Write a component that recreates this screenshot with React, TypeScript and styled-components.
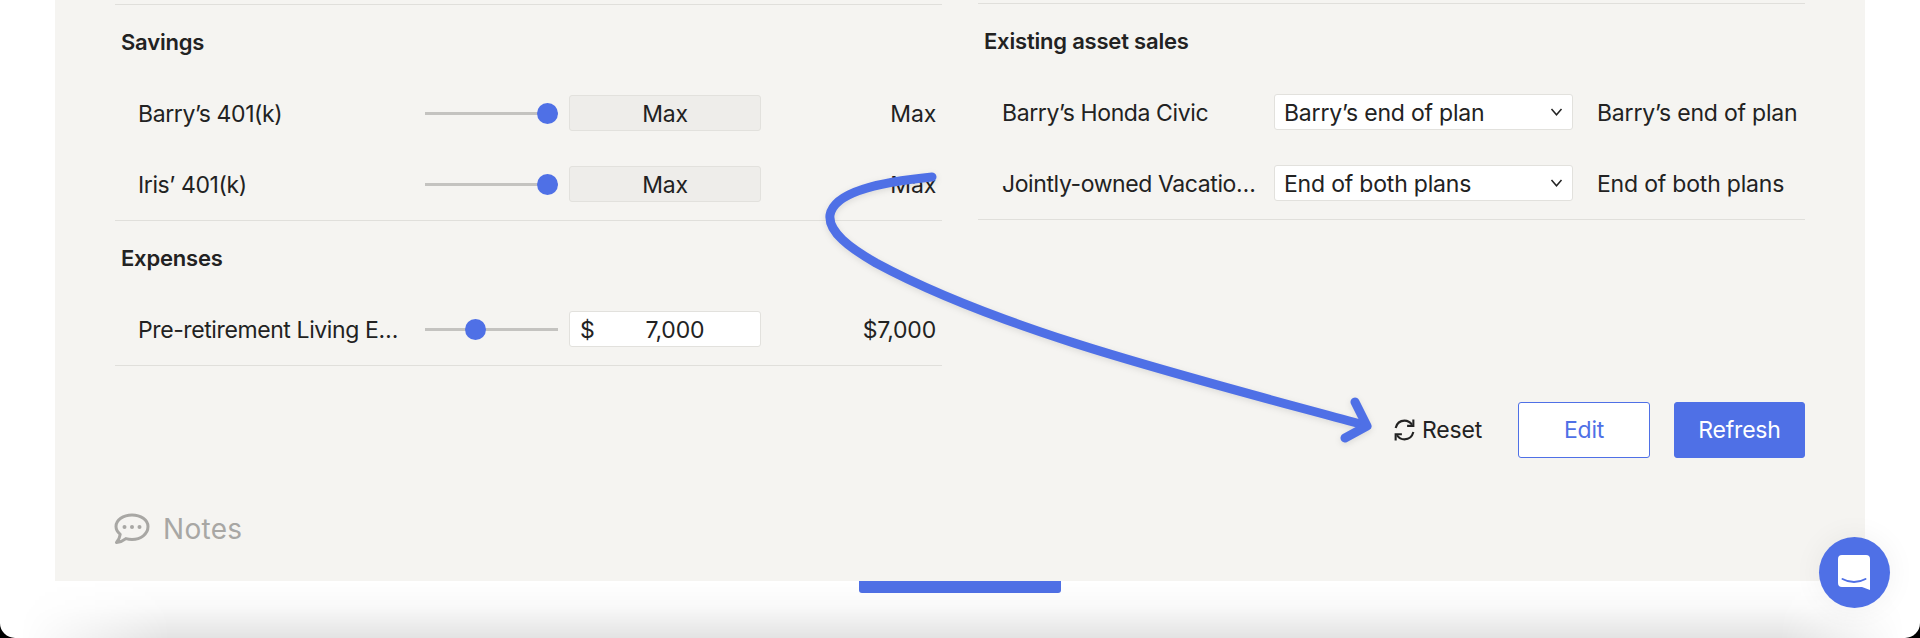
import React from 'react';
import styled, { createGlobalStyle } from 'styled-components';

const BLUE = '#4f70e6';

const GlobalStyle = createGlobalStyle`
  html, body {
    margin: 0;
    padding: 0;
    background: #000;
    font-family: Inter, 'Noto Sans', sans-serif;
  }
  * {
    box-sizing: border-box;
  }
`;

const savings = [
  { name: 'Barry’s 401(k)', value: 'Max' },
  { name: 'Iris’ 401(k)', value: 'Max' },
];

const sales = [
  { name: 'Barry’s Honda Civic', choice: 'Barry’s end of plan' },
  { name: 'Jointly-owned Vacation Home', choice: 'End of both plans' },
];

const SyncIcon = () => (
  <svg width="25" height="24" viewBox="0 0 24 23" fill="none" stroke="#222" strokeWidth="2">
    <path d="M3.5 9.5C4.6 5.2 8 2.5 12 2.5c3 0 5.4 1.3 7.2 4" />
    <path d="M20.5 1.5v6h-6" strokeWidth="2" />
    <path d="M20.5 13.5c-1.1 4.3-4.5 7-8.5 7-3 0-5.4-1.3-7.2-4" />
    <path d="M3.5 21.5v-6h6" />
  </svg>
);

const NotesIcon = () => (
  <svg width="36" height="32" viewBox="0 0 36 32" fill="none">
    <path
      d="M18 2C9.2 2 2 7 2 13.6c0 3 1.6 5.7 4.2 7.8-.3 2.800-1.700 5.600-3.700 8.100 3.600-.4 7-1.900 9.400-3.900 1.900.5 4 .8 6.100.8 8.800 0 16-5.300 16-12.800C34 7 26.800 2 18 2Z"
      stroke="#a8a7a4"
      strokeWidth="3"
      strokeLinejoin="round"
    />
    <circle cx="10.500" cy="14" r="2" fill="#a8a7a4" />
    <circle cx="18" cy="14" r="2" fill="#a8a7a4" />
    <circle cx="25.500" cy="14" r="2" fill="#a8a7a4" />
  </svg>
);

const ChevronIcon = () => (
  <svg width="13" height="8" viewBox="0 0 13 8" fill="none" stroke="#222" strokeWidth="1.500">
    <path d="M1.500 1 6.500 6.800l5-5.800" />
  </svg>
);

const ChatIcon = () => (
  <svg width="32" height="35" viewBox="0 0 32 35">
    <path
      d="M4 0h24a4 4 0 0 1 4 4v31l-8-3H4a4 4 0 0 1-4-4V4a4 4 0 0 1 4-4Z"
      fill="#fff"
    />
    <path d="M4.500 24c7 4 16 4 23 0" fill="none" stroke={BLUE} strokeWidth="2" strokeLinecap="round" />
  </svg>
);

export default function App() {
  return (
    <>
      <GlobalStyle />
      <Frame>
        <Panel>
          <Columns>
            <Column>
              <Section>
                <Heading>Savings</Heading>
                <Rows>
                  {savings.map((item) => (
                    <SliderRow key={item.name}>
                      <Label>{item.name}</Label>
                      <Slider $pos={92} />
                      <MaxBox>Max</MaxBox>
                      <Value>{item.value}</Value>
                    </SliderRow>
                  ))}
                </Rows>
              </Section>
              <Section>
                <Heading>Expenses</Heading>
                <Rows>
                  <SliderRow>
                    <Label>Pre-retirement Living Expenses</Label>
                    <Slider $pos={37.5} />
                    <MoneyBox>
                      <span>$</span>
                      <MoneyText>7,000</MoneyText>
                    </MoneyBox>
                    <Value>$7,000</Value>
                  </SliderRow>
                </Rows>
              </Section>
            </Column>
            <Column $top={3}>
              <Section>
                <Heading>Existing asset sales</Heading>
                <Rows>
                  {sales.map((item) => (
                    <SaleRow key={item.name}>
                      <Label>{item.name}</Label>
                      <Select>
                        {item.choice}
                        <ChevronIcon />
                      </Select>
                      <SaleValue>{item.choice}</SaleValue>
                    </SaleRow>
                  ))}
                </Rows>
              </Section>
            </Column>
          </Columns>
          <Actions>
            <ResetLink>
              <SyncIcon />
              Reset
            </ResetLink>
            <OutlineButton>Edit</OutlineButton>
            <SolidButton>Refresh</SolidButton>
          </Actions>
          <Notes>
            <NotesIcon />
            Notes
          </Notes>
        </Panel>
        <Tab />
        <Shade />
        <Arrow viewBox="0 0 1920 638" fill="none">
          <path
            d="M932 177C880 182 834 192 830 215C828 232 850 248 876 263C1000 330 1180 375 1364 425"
            stroke={BLUE}
            strokeWidth="9"
            strokeLinecap="round"
          />
          <path d="M1355 402L1367 426L1345 438" stroke={BLUE} strokeWidth="9" strokeLinecap="round" strokeLinejoin="round" />
        </Arrow>
        <Fab>
          <ChatIcon />
        </Fab>
      </Frame>
    </>
  );
}

const Frame = styled.div`
  position: relative;
  width: 1920px;
  height: 638px;
  padding: 0 55px;
  background: #fff;
  border-radius: 0 0 15px 15px;
  overflow: hidden;
  color: #222;
  font-size: 23px;
  letter-spacing: -0.2px;
`;

const Panel = styled.main`
  height: 581px;
  padding: 0 60px;
  background: #f5f4f1;
`;

const Columns = styled.div`
  display: grid;
  grid-template-columns: 827px 827px;
  column-gap: 36px;
`;

const Column = styled.div<{ $top?: number }>`
  padding-top: ${(p) => p.$top ?? 4}px;
  &::before {
    content: '';
    display: block;
    height: 1px;
    background: #e0dfdb;
  }
`;

const Section = styled.section`
  padding-bottom: 18px;
  border-bottom: 1px solid #e0dfdb;
`;

const Heading = styled.h3`
  margin: 22px 0 0 6px;
  height: 30px;
  line-height: 30px;
  font-size: 22px;
  font-weight: 600;
`;

const Rows = styled.div`
  display: flex;
  flex-direction: column;
  gap: 35px;
  padding-top: 38px;
`;

const SliderRow = styled.div`
  display: grid;
  grid-template-columns: 287px 133px 192px 1fr;
  align-items: center;
  height: 36px;
  padding: 0 6px 0 23px;
  line-height: 38px;
`;

const SaleRow = styled.div`
  display: grid;
  grid-template-columns: 272px 299px auto;
  align-items: center;
  height: 36px;
  padding-left: 24px;
  line-height: 38px;
`;

const Label = styled.div`
  width: 265px;
  height: 36px;
  overflow: hidden;
  white-space: nowrap;
  text-overflow: ellipsis;
  letter-spacing: -0.4px;
`;

const SaleValue = styled.div`
  height: 36px;
  padding-left: 24px;
  white-space: nowrap;
`;

const Slider = styled.div<{ $pos: number }>`
  position: relative;
  height: 3px;
  background: #c4c3c0;
  &::after {
    content: '';
    position: absolute;
    top: -9px;
    left: ${(p) => p.$pos}%;
    width: 21px;
    height: 21px;
    margin-left: -10px;
    border-radius: 50%;
    background: ${BLUE};
  }
`;

const FieldBox = styled.div`
  height: 36px;
  margin-left: 11px;
  width: 192px;
  border: 1px solid #e2e1dd;
  border-radius: 3px;
  line-height: 36px;
`;

const MaxBox = styled(FieldBox)`
  background: #eeedea;
  text-align: center;
`;

const MoneyBox = styled(FieldBox)`
  display: flex;
  padding-left: 10px;
  background: #fff;
`;

const MoneyText = styled.span`
  margin-left: 51px;
`;

const Value = styled.div`
  height: 36px;
  text-align: right;
`;

const Select = styled.div`
  display: flex;
  align-items: flex-start;
  justify-content: space-between;
  height: 36px;
  padding: 0 9px;
  background: #fff;
  border: 1px solid #e2e1dd;
  border-radius: 3px;
  line-height: 36px;
  white-space: nowrap;
  & > svg {
    align-self: center;
  }
`;

const Actions = styled.div`
  display: flex;
  justify-content: flex-end;
  align-items: center;
  margin-top: 36px;
`;

const ResetLink = styled.div`
  display: flex;
  align-items: center;
  gap: 5px;
  margin-right: 36px;
`;

const OutlineButton = styled.button`
  width: 132px;
  height: 56px;
  margin-right: 24px;
  border: 1px solid ${BLUE};
  border-radius: 3px;
  background: #fff;
  color: ${BLUE};
  font: inherit;
  letter-spacing: inherit;
`;

const SolidButton = styled(OutlineButton)`
  width: 131px;
  margin-right: 0;
  background: ${BLUE};
  color: #fff;
`;

const Notes = styled.div`
  display: flex;
  align-items: center;
  gap: 13px;
  height: 32px;
  margin: 55px 0 0 -1px;
  color: #a8a7a4;
  font-size: 28px;
  letter-spacing: 0.3px;
`;

const Tab = styled.div`
  width: 202px;
  height: 12px;
  margin-left: 804px;
  border-radius: 0 0 3px 3px;
  background: ${BLUE};
`;

const Shade = styled.div`
  position: absolute;
  left: 0;
  right: 0;
  bottom: 0;
  height: 57px;
  background: linear-gradient(to bottom, rgba(0, 0, 0, 0), rgba(0, 0, 0, 0.025) 45%, rgba(0, 0, 0, 0.11));
  -webkit-mask-image: linear-gradient(to right, transparent 20px, #000 170px, #000 1780px, transparent 1905px);
  mask-image: linear-gradient(to right, transparent 20px, #000 170px, #000 1780px, transparent 1905px);
  pointer-events: none;
`;

const Arrow = styled.svg`
  position: absolute;
  top: 0;
  left: 0;
  width: 1920px;
  height: 638px;
  filter: drop-shadow(0 2px 3px rgba(0, 0, 0, 0.1));
  pointer-events: none;
`;

const Fab = styled.div`
  position: absolute;
  left: 1819px;
  top: 537px;
  display: flex;
  align-items: center;
  justify-content: center;
  width: 71px;
  height: 71px;
  padding-right: 1px;
  border-radius: 50%;
  background: ${BLUE};
  box-shadow: 0 0 30px rgba(0, 0, 0, 0.06);
`;
